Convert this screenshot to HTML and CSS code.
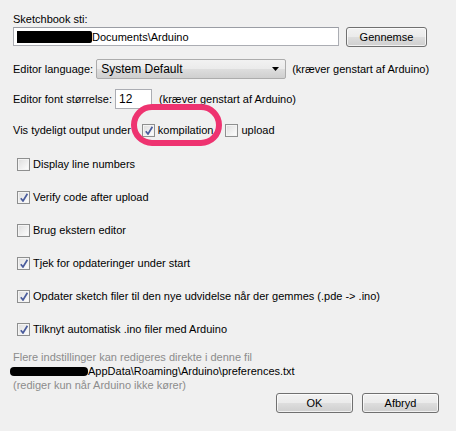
FILE: index.html
```html
<!DOCTYPE html>
<html>
<head>
<meta charset="utf-8">
<link rel="stylesheet" href="styles.css">
</head>
<body>
<div class="dialog">
  <div class="label">Sketchbook sti:</div>
  <div class="row path-row">
    <div class="textfield"><span class="redact"></span>Documents\Arduino</div>
    <div class="button browse">Gennemse</div>
  </div>
  <div class="row lang-row">
    <span class="label">Editor language:</span>
    <div class="combo"><span>System Default</span><svg class="arrow" width="7" height="4" viewBox="0 0 7 4"><path d="M0 0h7L3.5 4z" fill="#000"/></svg></div>
    <span class="label">(kræver genstart af Arduino)</span>
  </div>
  <div class="row font-row">
    <span class="label">Editor font størrelse:</span>
    <div class="numfield">12</div>
    <span class="label">(kræver genstart af Arduino)</span>
  </div>
  <div class="row vis-row">
    <span class="label">Vis tydeligt output under</span>
    <span class="check on vis-check1"></span><span class="label">kompilation</span>
    <span class="check vis-check2"></span><span class="label">upload</span>
    <div class="highlight"></div>
  </div>
  <div class="row opt first"><span class="check"></span><span class="label">Display line numbers</span></div>
  <div class="row opt"><span class="check on"></span><span class="label">Verify code after upload</span></div>
  <div class="row opt"><span class="check"></span><span class="label">Brug ekstern editor</span></div>
  <div class="row opt"><span class="check on"></span><span class="label">Tjek for opdateringer under start</span></div>
  <div class="row opt"><span class="check on"></span><span class="label">Opdater sketch filer til den nye udvidelse når der gemmes (.pde -&gt; .ino)</span></div>
  <div class="row opt"><span class="check on"></span><span class="label">Tilknyt automatisk .ino filer med Arduino</span></div>
  <div class="info">
    <div class="muted">Flere indstillinger kan redigeres direkte i denne fil</div>
    <div class="prefpath"><span class="redact small"></span>AppData\Roaming\Arduino\preferences.txt</div>
    <div class="muted">(rediger kun når Arduino ikke kører)</div>
  </div>
  <div class="actions">
    <div class="button">OK</div>
    <div class="button">Afbryd</div>
  </div>
</div>
</body>
</html>
```
FILE: styles.css
```css
html, body {
  margin: 0;
  padding: 0;
  background: #f0f0f0;
}
body {
  width: 456px;
  height: 431px;
  overflow: hidden;
  font-family: "Liberation Sans", Arial, sans-serif;
  font-size: 11px;
  color: #000;
}
.dialog {
  position: relative;
  padding: 13px 17px 0 13px;
  display: flex;
  flex-direction: column;
}
.label {
  line-height: 13px;
  white-space: nowrap;
}
.row {
  display: flex;
  align-items: center;
  height: 20px;
}
.path-row {
  margin-top: 1px;
}
.textfield {
  box-sizing: border-box;
  width: 326px;
  height: 19px;
  align-self: flex-start;
  background: #fff;
  border: 1px solid #abadb3;
  border-top-color: #9a9da4;
  display: flex;
  align-items: center;
  padding-left: 3px;
}
.redact {
  display: inline-block;
  width: 75px;
  height: 12px;
  background: #000;
  border-radius: 0 2px 2px 0;
}
.redact.small {
  width: 78px;
  height: 9px;
  border-radius: 4px;
  margin-left: -3px;
}
.button {
  box-sizing: border-box;
  width: 77px;
  height: 20px;
  border: 1px solid #707070;
  border-radius: 3px;
  background: linear-gradient(#f2f2f2 0%, #ebebeb 48%, #dddddd 52%, #cfcfcf 100%);
  box-shadow: inset 0 0 0 1px rgba(255,255,255,0.7);
  display: flex;
  align-items: center;
  justify-content: center;
  line-height: 13px;
}
.browse {
  width: 81px;
  margin-left: 7px;
}
.lang-row {
  margin-top: 12px;
}
.combo {
  box-sizing: border-box;
  width: 190px;
  height: 20px;
  margin-left: 3px;
  margin-right: 6px;
  border: 1px solid #acacac;
  border-radius: 2px;
  background: linear-gradient(#f2f2f2 0%, #ebebeb 48%, #dddddd 52%, #cfcfcf 100%);
  display: flex;
  align-items: center;
  justify-content: space-between;
  padding: 0 6px 0 4px;
  font-size: 12px;
}
.arrow {
  display: block;
}
.font-row {
  margin-top: 10px;
}
.numfield {
  box-sizing: border-box;
  width: 37px;
  height: 20px;
  margin-left: 3px;
  margin-right: 7px;
  background: #fff;
  border: 1px solid #abadb3;
  display: flex;
  align-items: center;
  padding-left: 3px;
  font-size: 12px;
}
.vis-row {
  position: relative;
  margin-top: 11px;
}
.check {
  box-sizing: border-box;
  display: inline-block;
  flex: none;
  width: 13px;
  height: 13px;
  border: 1px solid #8e8f8f;
  background: linear-gradient(135deg, #dcdcdc 0%, #eeeeee 50%, #ffffff 100%);
  box-shadow: inset 0 0 0 1px #f4f4f4;
  margin-right: 3px;
  position: relative;
}
.check.on::after {
  content: "";
  position: absolute;
  left: 2px;
  top: 1px;
  width: 8px;
  height: 9px;
  background: no-repeat center/8px 9px url("data:image/svg+xml;utf8,<svg xmlns='http://www.w3.org/2000/svg' width='8' height='9' viewBox='0 0 8 9'><path d='M0.8 5.2 L3 8 L7.4 0.8' fill='none' stroke='%234a5c9c' stroke-width='1.7'/></svg>");
}
.vis-check1 {
  margin-left: 11px;
}
.vis-check2 {
  margin-left: 12px;
}
.highlight {
  position: absolute;
  left: 118px;
  top: -16px;
  width: 91px;
  height: 42px;
  box-sizing: border-box;
  border: 6px solid #ee3370;
  border-radius: 21px;
}
.opt {
  margin-top: 13px;
  padding-left: 4px;
}
.opt.first {
  margin-top: 14px;
}
.info {
  margin-top: 11px;
  line-height: 14px;
}
.muted {
  color: #8c8c8c;
}
.prefpath {
  display: flex;
  align-items: center;
}
.actions {
  display: flex;
  justify-content: flex-end;
  gap: 9px;
  margin-top: 1px;
}
```
